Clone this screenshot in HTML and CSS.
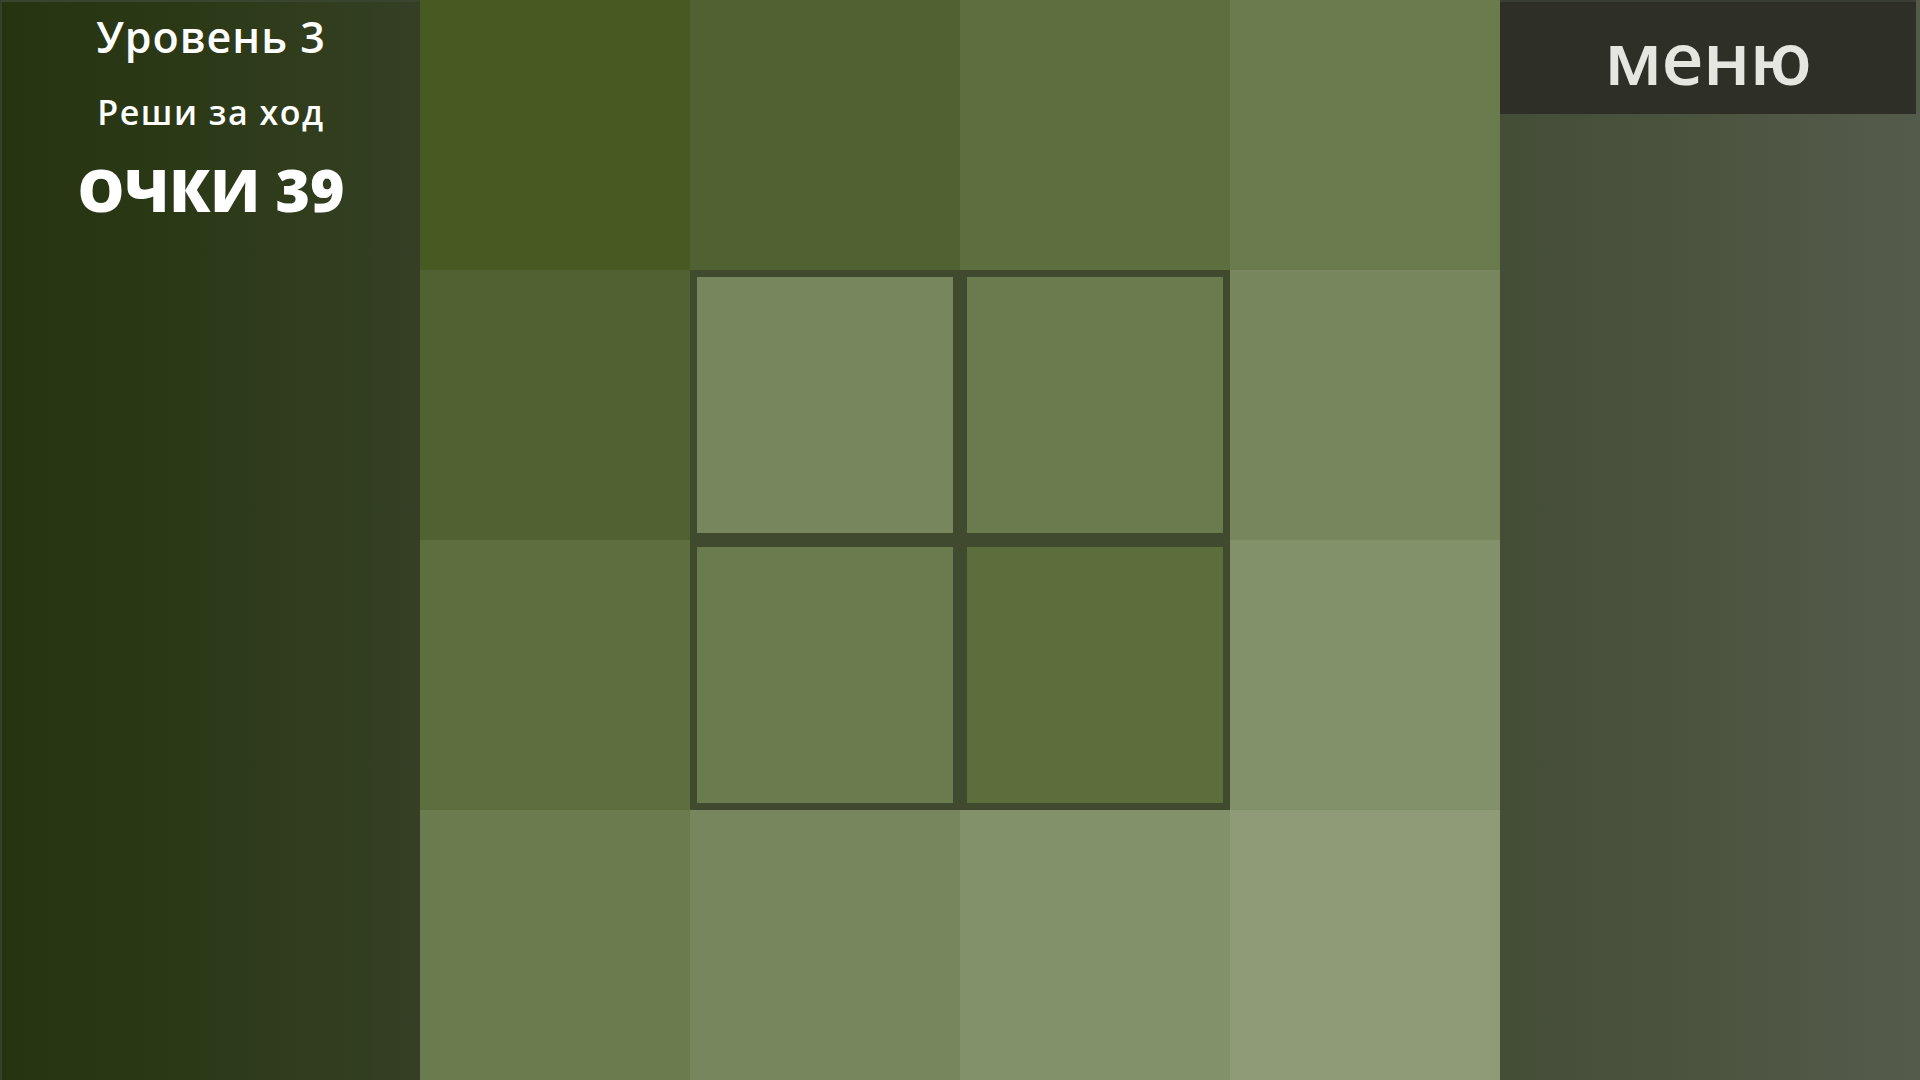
FILE: index.html
```html
<!DOCTYPE html>
<html lang="ru">
<head>
<meta charset="utf-8">
<title>Уровень 3</title>
<link rel="stylesheet" href="styles.css">
</head>
<body>
<div class="app">
  <aside class="side side-left">
    <div class="level">Уровень 3</div>
    <div class="task">Реши за ход</div>
    <div class="score">ОЧКИ 39</div>
  </aside>
  <main class="board">
    <div class="cell c0"></div>
    <div class="cell c1"></div>
    <div class="cell c2"></div>
    <div class="cell c3"></div>
    <div class="cell c1"></div>
    <div class="cell c4 sel"></div>
    <div class="cell c3 sel"></div>
    <div class="cell c4"></div>
    <div class="cell c2"></div>
    <div class="cell c3 sel"></div>
    <div class="cell c2b sel"></div>
    <div class="cell c5"></div>
    <div class="cell c3"></div>
    <div class="cell c4"></div>
    <div class="cell c5"></div>
    <div class="cell c6"></div>
  </main>
  <aside class="side side-right">
    <button class="menu-btn">меню</button>
  </aside>
</div>
</body>
</html>
```

FILE: styles.css
```css
html, body {
  margin: 0;
  padding: 0;
  width: 1920px;
  height: 1080px;
  overflow: hidden;
  font-family: "Open Sans", "Noto Sans", sans-serif;
}

.app {
  display: flex;
  width: 1920px;
  height: 1080px;
}

.side {
  width: 420px;
  height: 1080px;
  flex: none;
  box-sizing: border-box;
}

.side-left {
  background: linear-gradient(to right, #273411 0%, #2c3917 45%, #313d1d 75%, #343f25 100%);
  border-left: 2px solid #35402a;
  border-top: 2px solid #3a4530;
  display: flex;
  flex-direction: column;
  align-items: center;
  color: #ffffff;
  padding-top: 10px;
}

.level {
  font-size: 43px;
  font-weight: 600;
  line-height: 50px;
  letter-spacing: 1px;
}

.task {
  font-size: 34px;
  font-weight: 600;
  line-height: 40px;
  margin-top: 30px;
  letter-spacing: 1.5px;
}

.score {
  font-size: 59px;
  font-weight: 800;
  line-height: 70px;
  margin-top: 22px;
}

.board {
  width: 1080px;
  height: 1080px;
  flex: none;
  display: grid;
  grid-template-columns: repeat(4, 270px);
  grid-template-rows: repeat(4, 270px);
}

.cell {
  box-sizing: border-box;
}

.c0 { background: #465a22; }
.c1 { background: #516232; }
.c2 { background: #5e6f3f; }
.c2b { background: #5c6e3b; }
.c3 { background: #6a7b4d; }
.c4 { background: #77865d; }
.c5 { background: #829169; }
.c6 { background: #8f9a76; }

.sel {
  border: 7px solid #3f4a2f;
}

.side-right {
  background: linear-gradient(to right, #444d36 0%, #4c5440 50%, #555b4b 100%);
  padding-right: 4px;
}

.menu-btn {
  display: flex;
  align-items: center;
  justify-content: center;
  width: 100%;
  height: 114px;
  margin: 0;
  padding: 0 0 4px 0;
  box-sizing: border-box;
  background: #2e3027;
  border: none;
  border-top: 2px solid #3a3d33;
  color: #e6e6e0;
  font-family: "Open Sans", "Noto Sans", sans-serif;
  font-size: 73px;
  font-weight: 600;
  line-height: 73px;
  letter-spacing: -0.5px;
  cursor: pointer;
}
```
